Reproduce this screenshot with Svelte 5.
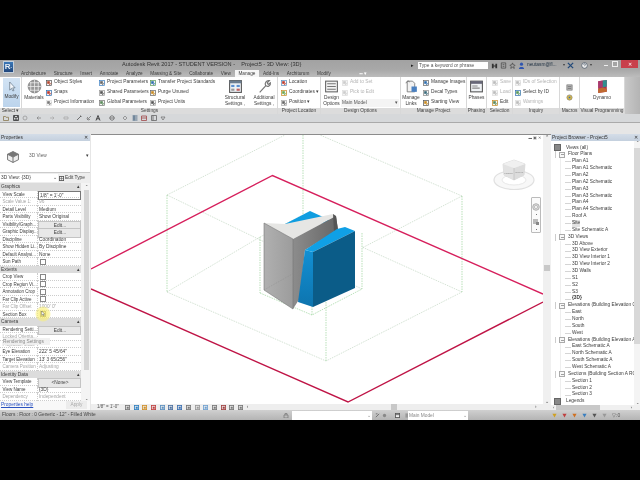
<script lang="ts">
	const tabs = ['Architecture', 'Structure', 'Insert', 'Annotate', 'Analyze', 'Massing & Site', 'Collaborate', 'View', 'Manage', 'Add-Ins', 'Architurum', 'Modify'];

	const settingsCols = [
		{ cls: 'w53', items: [['Object Styles', '#b5472f', '#555'], ['Snaps', '#c0392b', '#2f6fb0'], ['Project Information', '#777', '#ddd']] },
		{ cls: 'w51', items: [['Project Parameters', '#666', '#3b7fc4'], ['Shared Parameters', '#555', '#999'], ['Global Parameters', '#5a8a5a', '#777']] },
		{ cls: 'w70', items: [['Transfer Project Standards', '#2f6fb0', '#5a9a5a'], ['Purge Unused', '#c98a20', '#666'], ['Project Units', '#555', '#aaa']] }
	];
	const locationRows = [['Location', '#c0392b', '#5a8fc0'], ['Coordinates ▾', '#6aa84f', '#c98a20'], ['Position ▾', '#666', '#aaa']];
	const manageRows = [['Manage Images', '#2f6fb0', '#666'], ['Decal Types', '#3a6a7a', '#888'], ['Starting View', '#c98a20', '#555']];
	const selectionRows = [['Save', '#bbb', '#ddd', true], ['Load', '#bbb', '#ddd', true], ['Edit', '#5a8a5a', '#c98a20', false]];
	const inquiryRows = [['IDs of Selection', '#bbb', '#ddd', true], ['Select by ID', '#5a9a5a', '#2f6fb0', false], ['Warnings', '#bbb', '#ddd', true]];

	const rows = [
		{ h: 'Graphics' },
		{ l: 'View Scale', v: '1/8" = 1\'-0"', k: 'input' },
		{ l: 'Scale Value   1:', v: '96', m: true },
		{ l: 'Detail Level', v: 'Medium' },
		{ l: 'Parts Visibility', v: 'Show Original' },
		{ l: 'Visibility/Graph...', v: 'Edit...', k: 'btn' },
		{ l: 'Graphic Display...', v: 'Edit...', k: 'btn' },
		{ l: 'Discipline', v: 'Coordination' },
		{ l: 'Show Hidden Li...', v: 'By Discipline' },
		{ l: 'Default Analysi...', v: 'None' },
		{ l: 'Sun Path', k: 'check' },
		{ h: 'Extents' },
		{ l: 'Crop View', k: 'check' },
		{ l: 'Crop Region Vi...', k: 'check' },
		{ l: 'Annotation Crop', k: 'check' },
		{ l: 'Far Clip Active', k: 'check' },
		{ l: 'Far Clip Offset', v: '1000\' 0"', m: true },
		{ l: 'Section Box', k: 'check' },
		{ h: 'Camera' },
		{ l: 'Rendering Setti...', v: 'Edit...', k: 'btn' },
		{ l: 'Locked Orienta...', m: true },
		{ l: 'Projection Mode', m: true },
		{ l: 'Eye Elevation', v: '222\' 5 45/64"' },
		{ l: 'Target Elevation', v: '13\' 3 65/256"' },
		{ l: 'Camera Position', v: 'Adjusting', m: true },
		{ h: 'Identity Data' },
		{ l: 'View Template', v: '<None>', k: 'btn' },
		{ l: 'View Name', v: '{3D}' },
		{ l: 'Dependency', v: 'Independent', m: true }
	];

	const tree = [
		['Views (all)', 0], ['Floor Plans', 1],
		['Plan A1', 2], ['Plan A1 Schematic', 2], ['Plan A2', 2], ['Plan A2 Schematic', 2], ['Plan A3', 2], ['Plan A3 Schematic', 2], ['Plan A4', 2], ['Plan A4 Schematic', 2], ['Roof A', 2], ['Site', 2, 'sel'], ['Site Schematic A', 2],
		['3D Views', 1],
		['3D Above', 2], ['3D View Exterior', 2], ['3D View Interior 1', 2], ['3D View Interior 2', 2], ['3D Walls', 2], ['S1', 2], ['S2', 2], ['S3', 2], ['{3D}', 2, 'cur'],
		['Elevations (Building Elevation 0', 1],
		['East', 2], ['North', 2], ['South', 2], ['West', 2],
		['Elevations (Building Elevation A', 1],
		['East Schematic A', 2], ['North Schematic A', 2], ['South Schematic A', 2], ['West Schematic A', 2],
		['Sections (Building Section A RO', 1],
		['Section 1', 2], ['Section 2', 2], ['Section 3', 2],
		['Legends', 0]
	];

	// quick access glyphs, sep = wider gap before the icon
	const qat = [
		{ d: 'M.5 5.500V1.500h2l.6.8h2.400v3.200z', c: '#8a7a50' },
		{ d: 'M.5.5h5v5h-5zM1.500.5v2h3v-2M2 5.500V4h2v1.500', c: '#333' },
		{ d: 'M1 3a2 2 0 0 1 4 0M5 3a2 2 0 0 1-4 0', c: '#999' },
		{ d: 'M1 3h4M1 3l1.500-1.500M1 3l1.500 1.500', c: '#888', sep: true },
		{ d: 'M5 3H1M5 3L3.500 1.500M5 3L3.500 4.500', c: '#aaa', sep: true },
		{ d: 'M1 2h4v2H1z', c: '#aaa', sep: true },
		{ d: 'M1 5L5 1M4 1h1v1', c: '#555', sep: true },
		{ d: 'M1 5l1-1 3-3M2 2a1.500 1.500 0 1 0 2 2', c: '#777' },
		{ d: 'M1 5.500L3 .5l2 5M1.800 3.800h2.400', c: '#222' },
		{ d: 'M3 .8a2.200 2.200 0 1 0 .01 0M.8 3h4.400', c: '#666', sep: true },
		{ d: 'M3 1l2 2-2 2-2-2z', c: '#888', sep: true },
		{ d: 'M.5 1h5M.5 3h5M.5 5h5M2 .5v5', c: '#3a5a7a' },
		{ d: 'M.5 1h5v4.500h-5zM.5 3h5', c: '#a04848' },
		{ d: 'M.5.5h5v5h-5zM2 .5v5', c: '#666' },
		{ d: 'M1 2l2 3 2-3z', c: '#777' }
	];
	const viewIcons = ['#777', '#2f7fc0', '#d0902a', '#c04040', '#5a8fc0', '#4a6fa0', '#3a6fb0', '#777', '#999', '#6fa0d0', '#777', '#a04040', '#777', '#777'];
	const browserIcons = ['#d0a020', '#c04040', '#d07020', '#3a7fc0', '#555', '#999'];
</script>

{#snippet ic(a: string, b: string)}
	<svg class="ic" viewBox="0 0 6 6" aria-hidden="true">
		<rect x="0.5" y="0.5" width="5" height="5" fill="#f4f4f4" stroke={b} stroke-width="0.7" />
		<rect x="1.2" y="1.2" width="2.6" height="2.6" fill={a} />
		<path d="M3 5 L5.4 3" stroke={a} stroke-width="0.8" />
	</svg>
{/snippet}

{#snippet tool(label: string, a: string, b: string, off = false)}
	<div class="tool" class:off>
		{@render ic(a, b)}
		<span>{label}</span>
	</div>
{/snippet}

<div class="app">
	<header class="chrome">
		<div class="rbtn">R<i>-</i></div>
		<div class="stack">
			<div class="titlebar">
				<span class="title">Autodesk Revit 2017 - STUDENT VERSION -&nbsp;&nbsp;&nbsp;&nbsp;Project5 - 3D View: &#123;3D&#125;</span>
				<span class="search-arrow">▸</span>
				<span class="search">Type a keyword or phrase</span>
				<div class="infocenter">
					<svg class="ib" viewBox="0 0 8 8" aria-hidden="true"><path d="M1 2h2v5H1zM5 2h2v5H5zM3 4h2v1H3z" fill="#333" /></svg>
					<svg class="ib" viewBox="0 0 8 8" aria-hidden="true"><path d="M1.500 1h5v6h-5zM3 3h2M3 5h2" fill="none" stroke="#444" stroke-width=".8" /></svg>
					<svg class="ib" viewBox="0 0 8 8" aria-hidden="true"><path d="M4 1l1 2.400 2 .2-1.500 1.500.5 2.200L4 6 2 7.300l.5-2.200L1 3.600l2-.2z" fill="none" stroke="#444" stroke-width=".8" /></svg>
					<svg class="ib" viewBox="0 0 8 8" aria-hidden="true"><circle cx="4" cy="2.500" r="1.800" fill="#2f55b0" /><path d="M1 8c0-3 6-3 6 0z" fill="#2f55b0" /></svg>
					<span class="user">neutasm@fl...</span>
					<span class="caret">▾</span>
					<svg class="ib" viewBox="0 0 8 8" aria-hidden="true"><path d="M1 1l6 6M7 1L1 7" stroke="#234a7a" stroke-width="1.500" /></svg>
					<svg class="ib help" viewBox="0 0 8 8" aria-hidden="true"><circle cx="4" cy="4" r="3.200" fill="#eee" stroke="#345" stroke-width=".7" /><path d="M3 3c0-1.300 2-1.300 2 0 0 .8-1 .8-1 1.800" fill="none" stroke="#345" stroke-width=".7" /></svg>
					<span class="caret">▾</span>
				</div>
				<div class="winbtns">
					<span class="min"></span>
					<span class="max"></span>
					<span class="close">✕</span>
				</div>
			</div>
			<nav class="tabs">
				{#each tabs as t}
					<span class="tab" class:active={t === 'Manage'}>{t}</span>
				{/each}
				<span class="tabmore">▪▪ ▾</span>
			</nav>
		</div>
	</header>

	<section class="ribbon">
		<div class="panel p-select">
			<div class="body">
				<div class="modify">
					<svg class="cursor" viewBox="0 0 10 12" aria-hidden="true"><path d="M3 1v9l2-2 1.500 3 1.300-.6L6.300 7.500H9z" fill="#f4f8fc" stroke="#567" stroke-width=".7" /></svg>
					<span>Modify</span>
				</div>
			</div>
			<div class="plabel">Select ▾</div>
		</div>

		<div class="panel p-settings">
			<div class="body">
				<div class="big w24">
					<svg class="bigicon" viewBox="0 0 14 14" aria-hidden="true">
						<circle cx="7" cy="7" r="6" fill="#999" stroke="#666" stroke-width=".5" />
						<path d="M1 7h12M7 1v12M2.500 3.500h9M2.500 10.500h9M3.500 2.500v9M10.500 2.500v9" stroke="#eee" stroke-width=".7" />
					</svg>
					<span>Materials</span>
				</div>
				{#each settingsCols as col}
					<div class="col {col.cls}">
						{#each col.items as it}
							{@render tool(it[0], it[1], it[2])}
						{/each}
					</div>
				{/each}
				<div class="big w30">
					<svg class="bigicon" viewBox="0 0 14 14" aria-hidden="true">
						<rect x="1.500" y="1.500" width="11" height="11" fill="#eef2f6" stroke="#555" />
						<rect x="1.500" y="1.500" width="11" height="2.500" fill="#6b7c8f" />
						<rect x="3" y="5.500" width="3" height="2" fill="#5a8fd0" /><rect x="8" y="5.500" width="3" height="2" fill="#5a8fd0" />
						<rect x="3" y="9" width="3" height="2" fill="#999" /><rect x="8" y="9" width="3" height="2" fill="#c06060" />
					</svg>
					<span>Structural<br />Settings ,</span>
				</div>
				<div class="big w28">
					<svg class="bigicon" viewBox="0 0 14 14" aria-hidden="true">
						<path d="M2.500 12.500l6-6.500M8 6c-1-2 .5-5 3.500-4.500L9.500 3.500l1 1.500 2-1.500C13 6 10 8 8 6z" fill="none" stroke="#777" stroke-width="1.100" />
					</svg>
					<span>Additional<br />Settings ,</span>
				</div>
			</div>
			<div class="plabel">Settings</div>
		</div>

		<div class="panel p-location">
			<div class="body">
				<div class="col pad3">
					{#each locationRows as it}
						{@render tool(it[0], it[1], it[2])}
					{/each}
				</div>
			</div>
			<div class="plabel">Project Location</div>
		</div>

		<div class="panel p-design">
			<div class="body">
				<div class="big w21">
					<svg class="bigicon" viewBox="0 0 14 14" aria-hidden="true">
						<rect x="1.500" y="2" width="11" height="10" fill="#f2f2f2" stroke="#666" />
						<path d="M3 4.500h8M3 7h8M3 9.500h8" stroke="#777" />
					</svg>
					<span>Design<br />Options</span>
				</div>
				<div class="col grow">
					{@render tool('Add to Set', '#ccc', '#ddd', true)}
					{@render tool('Pick to Edit', '#ccc', '#ddd', true)}
					<div class="combo">Main Model <b>▾</b></div>
				</div>
			</div>
			<div class="plabel">Design Options</div>
		</div>

		<div class="panel p-manage">
			<div class="body">
				<div class="big w20">
					<svg class="bigicon" viewBox="0 0 14 14" aria-hidden="true">
						<path d="M3 2h5l2 2v8H3z" fill="#f2f2f2" stroke="#777" stroke-width=".8" />
						<path d="M2 4c0-2 3-3 3-1" fill="none" stroke="#777" stroke-width=".9" />
						<rect x="7" y="7" width="5" height="5" fill="#4a80c0" />
					</svg>
					<span>Manage<br />Links</span>
				</div>
				<div class="col pad2">
					{#each manageRows as it}
						{@render tool(it[0], it[1], it[2])}
					{/each}
				</div>
			</div>
			<div class="plabel">Manage Project</div>
		</div>

		<div class="panel p-phasing">
			<div class="body">
				<div class="big wfull">
					<svg class="bigicon" viewBox="0 0 14 14" aria-hidden="true">
						<rect x="1.500" y="2" width="11" height="10" fill="#f0f3f6" stroke="#555" />
						<rect x="1.500" y="2" width="11" height="2.500" fill="#667" />
						<path d="M3 6.500h5M3 8.500h7" stroke="#888" />
					</svg>
					<span>Phases</span>
				</div>
			</div>
			<div class="plabel">Phasing</div>
		</div>

		<div class="panel p-selection">
			<div class="body">
				<div class="col pad5">
					{#each selectionRows as it}
						{@render tool(it[0] as string, it[1] as string, it[2] as string, it[3] as boolean)}
					{/each}
				</div>
			</div>
			<div class="plabel">Selection</div>
		</div>

		<div class="panel p-inquiry">
			<div class="body">
				<div class="col pad2">
					{#each inquiryRows as it}
						{@render tool(it[0] as string, it[1] as string, it[2] as string, it[3] as boolean)}
					{/each}
				</div>
			</div>
			<div class="plabel">Inquiry</div>
		</div>

		<div class="panel p-macros">
			<div class="body macros">
				<svg class="mi" viewBox="0 0 8 8" aria-hidden="true"><rect x="1" y="1" width="6" height="6" fill="#bbb" stroke="#666" stroke-width=".7" /><path d="M2 3h4M2 5h4" stroke="#555" stroke-width=".7" /></svg>
				<svg class="mi" viewBox="0 0 8 8" aria-hidden="true"><circle cx="4" cy="4" r="3" fill="#e5c040" stroke="#777" stroke-width=".7" /><path d="M3 3h2v2H3z" fill="#3a6fb0" /></svg>
			</div>
			<div class="plabel">Macros</div>
		</div>

		<div class="panel p-dynamo">
			<div class="body">
				<div class="big wfull">
					<svg class="bigicon" viewBox="0 0 14 14" aria-hidden="true">
						<path d="M3 2l8-1v11l-8 1z" fill="#b03050" />
						<path d="M7 1.500l4-.5v6l-4 1z" fill="#2f8f8f" />
						<path d="M3 2l4-.5v6l-4 1z" fill="#a83a70" />
						<path d="M3 9l4-1 4 1v3l-8 1z" fill="#c06a30" />
					</svg>
					<span>Dynamo</span>
				</div>
			</div>
			<div class="plabel">Visual Programming</div>
		</div>
		<div class="ribbon-end"></div>
	</section>

	<div class="qat">
		{#each qat as q}
			<svg class="qi" class:sep={q.sep} viewBox="0 0 6 6" aria-hidden="true"><path d={q.d} fill="none" stroke={q.c} stroke-width=".8" /></svg>
		{/each}
	</div>
	<div class="band"></div>

	<main class="work">
		<aside class="props">
			<div class="phead"><span>Properties</span><b>✕</b></div>
			<div class="typesel">
				<svg class="typeicon" viewBox="0 0 18 18" aria-hidden="true">
					<path d="M9 2l7 3.500v7L9 16l-7-3.500v-7z" fill="#eee" stroke="#555" />
					<path d="M2 5.500L9 9l7-3.500M9 9v7" fill="none" stroke="#555" />
					<path d="M2 5.500L9 2l7 3.500L9 9z" fill="#777" />
				</svg>
				<span class="typename">3D View</span>
				<b>▾</b>
			</div>
			<div class="typerow">
				<div class="typecombo"><span>3D View: &#123;3D&#125;</span><b>⌄</b></div>
				<div class="edittype">
					<svg class="et" viewBox="0 0 6 6" aria-hidden="true"><rect x=".5" y=".5" width="5" height="5" fill="none" stroke="#555" /><path d="M.5 3h5M3 .5v5" stroke="#555" stroke-width=".6" /></svg>
					Edit Type
				</div>
			</div>
			<div class="ptable">
				<div class="plist">
					{#each rows as r}
						{#if r.h}
							<div class="psec"><span>{r.h}</span><b>▴</b></div>
						{:else}
							<div class="prow" class:muted={r.m}>
								<span class="pl">{r.l}</span>
								{#if r.k === 'btn'}
									<span class="pv btn">{r.v}</span>
								{:else if r.k === 'input'}
									<span class="pv inp">{r.v}</span>
								{:else if r.k === 'check'}
									<span class="pv"><i class="check"></i></span>
								{:else}
									<span class="pv">{r.v ?? ''}</span>
								{/if}
							</div>
						{/if}
					{/each}
				</div>
				<div class="vscroll"><b>⌃</b><i class="thumb"></i><b>⌄</b></div>
			</div>
			<div class="phelp"><a href="#help">Properties help</a><span class="apply">Apply</span></div>
			<div class="ghost">Rendering Settings</div>
			<div class="spot"></div>
			<svg class="arrow" viewBox="0 0 8 10" aria-hidden="true"><path d="M1 1v7l1.800-1.600 1.200 2.600 1-.5-1.200-2.500H6z" fill="#fff" stroke="#333" stroke-width=".6" /></svg>
		</aside>

		<div class="viewport">
			<div class="canvasrow">
				<div class="canvas">
					<svg class="model" viewBox="91 135 452 269" aria-label="3D view">
						<g class="grid">
							<path d="M167 195L285 135M167 195L362 289M167 292L260 237M167 292L326 361L462 292M462 196L320 135M462 196L362 248M462 292L362 247M260 237L303 215" />
							<path class="gv" d="M167 195V292M462 196V292M303 135V216M260 237V293M326 361V290M362 233V289M312 315V300M260 293L312 315L362 289" />
						</g>
						<path class="red top" d="M91 269L272.500 175.500L543 294" />
						<path class="red" d="M91 289L348 402L543 302" />

						<path d="M285 224L310 211L334 222L300 226Z" fill="#0f9de0" />
						<path d="M264 223L285 224L333 214L336 216L293 239Z" fill="#e6e6e4" />
						<path d="M264 223L293 239V309L264 290Z" fill="url(#wedgeL)" />
						<path d="M293 239L336 216L338 230L305 250L300 298L293 309Z" fill="url(#wedgeR)" />
						<path d="M333 214L336 216L338 230L334 232Z" fill="#555" />
						<path d="M264 223L293 239V309L264 290Z" fill="none" stroke="#777" stroke-width=".6" />
						<path d="M264 290L303 268" stroke="#8a8a8a" stroke-width=".5" stroke-dasharray="1 1" fill="none" />

						<path d="M305 250L313 252V307L298 302Z" fill="url(#blueL)" />
						<path d="M305 250L337 229L345 227L355 231L313 252Z" fill="#10a0e6" />
						<path d="M313 252L355 231V288L313 307Z" fill="#0b5c88" />

						<defs>
							<linearGradient id="wedgeL" x1="0" x2="1"><stop offset="0" stop-color="#b0b0b0" /><stop offset="1" stop-color="#9c9c9c" /></linearGradient>
							<linearGradient id="wedgeR" x1="0" x2="1"><stop offset="0" stop-color="#8c8c8c" /><stop offset="1" stop-color="#666" /></linearGradient>
							<linearGradient id="blueL" x1="0" x2="0" y1="0" y2="1"><stop offset="0" stop-color="#1290d4" /><stop offset="1" stop-color="#0e74ae" /></linearGradient>
						</defs>
					</svg>

					<svg class="viewcube" viewBox="0 0 44 32" aria-hidden="true">
						<ellipse cx="21" cy="21" rx="20" ry="9.500" fill="#f8f8f8" stroke="#e0e0e0" stroke-width="1.200" />
						<ellipse cx="21" cy="21" rx="12" ry="5" fill="#fff" stroke="#e8e8e8" />
						<path d="M21 1l11 4-1 11-10 5-10-5-1-11z" fill="#e8e8e8" stroke="#ccc" stroke-width=".6" />
						<path d="M21 9l11-4-1 11-10 5z" fill="#dcdcdc" />
						<path d="M10 5l11 4v12l-10-5z" fill="#e2e2e2" />
						<path d="M10 5l11 4 11-4-11-4z" fill="#f0f0f0" />
						<path d="M21 9v12" stroke="#bbb" stroke-width=".6" />
						<text x="15.500" y="15" class="cube-t">FRONT</text>
						<text x="26.500" y="14" class="cube-t">RIGHT</text>
					</svg>
					<div class="navbar">
						<svg class="nav1" viewBox="0 0 8 8" aria-hidden="true"><circle cx="4" cy="4" r="3.300" fill="#ddd" stroke="#999" stroke-width=".7" /><circle cx="4" cy="4" r="1.600" fill="#f4f4f4" stroke="#999" stroke-width=".5" /></svg>
						<i></i>
						<svg class="nav1" viewBox="0 0 8 8" aria-hidden="true"><rect x="1" y="1" width="5" height="5" fill="#bbb" /><rect x="4" y="4" width="3" height="3" fill="#888" /></svg>
						<i></i>
					</div>
					<div class="vctrl">▬ ▣ ✕</div>
				</div>
				<div class="cscroll"><b>⌃</b><i class="cthumb"></i><b>⌄</b></div>
			</div>
			<div class="viewbar">
				<span class="scale">1/8" = 1'-0"</span>
				<div class="vicons">
					{#each viewIcons as c}
						<svg class="vi" viewBox="0 0 6 6" aria-hidden="true"><rect x=".5" y=".5" width="5" height="5" fill="none" stroke={c} /><rect x="2" y="2" width="2.500" height="2.500" fill={c} /></svg>
					{/each}
					<span class="lt">‹</span>
				</div>
				<i class="hthumb"></i>
				<span class="rt">›</span>
			</div>
		</div>

		<aside class="browser">
			<div class="phead"><span>Project Browser - Project5</span><b>✕</b></div>
			<div class="treewrap">
				<div class="tree">
					{#each tree as t}
						<div class="node l{t[1]} {t[2] ?? ''}">
							{#if t[1] === 1}<i class="exp"></i>{/if}
							{#if t[1] === 0}<i class="rooticon"></i>{/if}
							<span>{t[0]}</span>
						</div>
					{/each}
				</div>
				<div class="bscroll"><b>⌃</b><i class="bthumb"></i><b>⌄</b></div>
			</div>
			<div class="bhscroll"><span>‹</span><i></i><span>›</span></div>
		</aside>
	</main>

	<footer class="status">
		<span class="stext">Floors : Floor : 0 Generic - 12" - Filled White</span>
		<svg class="lock" viewBox="0 0 6 6" aria-hidden="true"><path d="M1 3h4v3H1zM2 3V1.500h2V3" fill="none" stroke="#777" stroke-width=".7" /></svg>
		<div class="scombo wa"><b>⌄</b></div>
		<span class="sicons">
			<svg class="vi" viewBox="0 0 6 6" aria-hidden="true"><path d="M1 5L5 1M1 1h2" stroke="#666" /></svg>
			<svg class="vi" viewBox="0 0 6 6" aria-hidden="true"><circle cx="3" cy="3" r="2" fill="#888" /></svg>
		</span>
		<span class="sicons gap2">
			<svg class="vi" viewBox="0 0 6 6" aria-hidden="true"><rect x=".5" y=".5" width="5" height="5" fill="#eee" stroke="#555" /><path d="M.5 2h5" stroke="#555" /></svg>
			<svg class="vi" viewBox="0 0 6 6" aria-hidden="true"><rect x=".5" y=".5" width="5" height="5" fill="#999" /></svg>
		</span>
		<div class="scombo wb"><span>Main Model</span><b>⌄</b></div>
		<div class="bicons">
			{#each browserIcons as c}
				<svg class="vi" viewBox="0 0 6 6" aria-hidden="true"><path d="M.5 1h5L3 5.500z" fill={c} /></svg>
			{/each}
			<span class="filter">▽:0</span>
		</div>
	</footer>
</div>

<style>
	:global(body) {
		margin: 0;
		padding-top: 60px;
		box-sizing: border-box;
		background: #000;
		height: 480px;
		overflow: hidden;
	}

	.app {
		width: 640px;
		height: 360px;
		font-family: 'Liberation Sans', Arial, sans-serif;
		font-size: 4.800px;
		color: #3c3c3c;
		line-height: 1;
		background: #e6e6e6;
		filter: blur(0.3px);
		overflow: hidden;
	}

	b {
		font-weight: normal;
	}

	/* title + tabs */
	.chrome {
		display: flex;
		height: 17px;
		background: linear-gradient(#a2a2a2, #a8a8a8 55%, #bcbcbc);
	}

	.rbtn {
		width: 11px;
		height: 12px;
		margin: 1px 0 0 3px;
		background: linear-gradient(#3a78b8, #20467c);
		border: 1px solid #c4d0dc;
		box-sizing: border-box;
		color: #e8eef4;
		font-size: 8px;
		font-weight: bold;
		line-height: 10px;
		text-align: center;
		flex: none;
	}

	.rbtn i {
		font-style: normal;
		font-size: 5px;
	}

	.stack {
		flex: 1;
		min-width: 0;
		display: flex;
		flex-direction: column;
	}

	.titlebar {
		height: 10px;
		display: flex;
		align-items: center;
	}

	.title {
		margin-left: 108px;
		width: 289px;
		font-size: 5.600px;
		white-space: nowrap;
		color: #333;
		flex: none;
	}

	.search-arrow {
		width: 7px;
		font-size: 5px;
		flex: none;
		color: #222;
	}

	.search {
		width: 70px;
		height: 7px;
		line-height: 7px;
		background: #fff;
		padding-left: 1px;
		box-sizing: border-box;
		color: #555;
		flex: none;
	}

	.infocenter {
		display: flex;
		align-items: center;
		gap: 2px;
		margin-left: 3px;
		width: 113px;
		flex: none;
	}

	.ib {
		width: 7px;
		height: 7px;
		flex: none;
	}

	.help {
		margin-left: 5px;
	}

	.user {
		color: #234;
		width: 34px;
		flex: none;
		white-space: nowrap;
	}

	.caret {
		font-size: 4px;
	}

	.winbtns {
		display: flex;
		align-items: stretch;
		height: 8px;
		margin-top: -2px;
		flex: none;
	}

	.min {
		width: 4px;
		height: 1px;
		background: #eee;
		margin: 5px 4px 0 0;
	}

	.max {
		width: 4px;
		height: 4px;
		border: 1px solid #eee;
		margin: 1px 3px 0 0;
	}

	.close {
		width: 17px;
		background: #c8404c;
		color: #fff;
		text-align: center;
		line-height: 8px;
		font-size: 5px;
	}

	.tabs {
		height: 7px;
		display: flex;
		gap: 0;
		padding-left: 3.300px;
		align-items: stretch;
		font-size: 4.700px;
	}

	.tab {
		padding: 0 3.800px;
		line-height: 7px;
		white-space: nowrap;
		color: #3a3a3a;
	}

	.tab.active {
		background: #f6f6f6;
	}

	.tabmore {
		margin-left: 25px;
		line-height: 7px;
		color: #fff;
		white-space: nowrap;
	}

	/* ribbon */
	.ribbon {
		display: flex;
		height: 37px;
		background: #fff;
	}

	.panel {
		display: flex;
		flex-direction: column;
		border-right: 1px solid #d8d8d8;
		box-sizing: border-box;
		flex: none;
	}

	.p-select { width: 22px; }
	.p-settings { width: 256px; }
	.p-location { width: 43px; }
	.p-design { width: 80px; }
	.p-manage { width: 66px; }
	.p-phasing { width: 20px; }
	.p-selection { width: 26px; }
	.p-inquiry { width: 47px; }
	.p-macros { width: 20px; }
	.p-dynamo { width: 45px; }

	.ribbon-end {
		flex: 1;
		background: linear-gradient(90deg, #c8c8c8, #b4b4b4);
	}

	.body {
		height: 31px;
		display: flex;
		flex: none;
	}

	.plabel {
		height: 6px;
		line-height: 6px;
		background: #dcdcdc;
		text-align: center;
		white-space: nowrap;
		color: #444;
	}

	.modify {
		width: 17px;
		margin: 1px 0 0 3px;
		height: 29px;
		background: linear-gradient(#d2e3f4, #bcd4ec);
		display: flex;
		flex-direction: column;
		align-items: center;
		padding-top: 3px;
		box-sizing: border-box;
		gap: 3px;
	}

	.cursor {
		width: 9px;
		height: 11px;
	}

	.big {
		display: flex;
		flex-direction: column;
		align-items: center;
		text-align: center;
		line-height: 6.500px;
		padding-top: 2px;
		box-sizing: border-box;
		flex: none;
		white-space: nowrap;
	}

	.bigicon {
		width: 15px;
		height: 15px;
		margin-bottom: 0.500px;
		flex: none;
	}

	.w20 { width: 20px; }
	.w21 { width: 21px; }
	.w24 { width: 24px; }
	.w28 { width: 28px; }
	.w30 { width: 30px; }
	.w51 { width: 51px; }
	.w53 { width: 53px; }
	.w70 { width: 70px; }
	.wfull { width: 100%; }

	.col {
		display: flex;
		flex-direction: column;
		flex: none;
		padding-top: 0.500px;
	}

	.grow { flex: 1; min-width: 0; }
	.pad2 { padding-left: 2px; }
	.pad3 { padding-left: 3px; }
	.pad5 { padding-left: 5px; }

	.tool {
		height: 10px;
		display: flex;
		align-items: center;
		gap: 2px;
		white-space: nowrap;
	}

	.tool.off {
		color: #b4b4b4;
	}

	.ic {
		width: 6px;
		height: 6px;
		flex: none;
	}

	.combo {
		margin: 1px 1px 0 -1px;
		height: 8px;
		line-height: 8px;
		background: #f4f4f4;
		color: #555;
		padding: 0 1px;
		display: flex;
		justify-content: space-between;
	}

	.macros {
		flex-direction: column;
		align-items: center;
		gap: 3px;
		padding-top: 7px;
		box-sizing: border-box;
	}

	.mi {
		width: 7px;
		height: 7px;
	}

	/* toolbars */
	.qat {
		height: 9px;
		display: flex;
		align-items: center;
		gap: 3.500px;
		padding-left: 3px;
		background: #d6d8da;
		border-bottom: 1px solid #aaa;
		box-sizing: border-box;
	}

	.qi {
		width: 6px;
		height: 6px;
		flex: none;
	}

	.qi.sep {
		margin-left: 4px;
	}

	.band {
		height: 11px;
		background: #e6e6e6;
	}

	/* main area */
	.work {
		display: flex;
		height: 276px;
	}

	.props {
		position: relative;
		width: 90px;
		flex: none;
		display: flex;
		flex-direction: column;
		background: #f4f4f4;
		margin-right: 1px;
	}

	.phead {
		height: 7px;
		line-height: 7px;
		background: linear-gradient(#d4dde8, #c4d0de);
		padding: 0 2px 0 1px;
		display: flex;
		justify-content: space-between;
		color: #333;
		flex: none;
	}

	.typesel {
		height: 32px;
		background: #fff;
		display: flex;
		align-items: center;
		flex: none;
		border-bottom: 1px solid #ccc;
		box-sizing: border-box;
		padding-right: 1px;
	}

	.typeicon {
		width: 14px;
		height: 14px;
		margin-left: 6px;
	}

	.typename {
		margin-left: 9px;
		flex: 1;
		color: #666;
	}

	.typerow {
		height: 10px;
		display: flex;
		align-items: center;
		flex: none;
		gap: 1px;
		background: #eee;
		padding-right: 3px;
	}

	.typecombo {
		width: 58px;
		height: 8px;
		line-height: 8px;
		background: #fff;
		padding: 0 1px;
		box-sizing: border-box;
		display: flex;
		justify-content: space-between;
	}

	.edittype {
		flex: 1;
		white-space: nowrap;
		display: flex;
		align-items: center;
		gap: 1px;
	}

	.et {
		width: 5px;
		height: 5px;
	}

	.ptable {
		height: 217.500px;
		display: flex;
		background: #fff;
		flex: none;
	}

	.plist {
		width: 81px;
		flex: none;
	}

	.psec {
		height: 7.500px;
		line-height: 7.500px;
		background: #dcdcdc;
		padding: 0 1px;
		display: flex;
		justify-content: space-between;
		box-sizing: border-box;
	}

	.prow {
		height: 7.500px;
		line-height: 7.500px;
		display: grid;
		grid-template-columns: 38px minmax(0, 1fr);
		border-bottom: 1px dotted #ccc;
		box-sizing: border-box;
		background: #fff;
	}

	.prow.muted {
		color: #a6a6a6;
	}

	.pl {
		padding-left: 2.500px;
		border-right: 1px dotted #ccc;
		white-space: nowrap;
		font-size: 4.500px;
		min-width: 0;
	}

	.pv {
		padding-left: 1px;
		white-space: nowrap;
		display: flex;
		align-items: center;
		min-width: 0;
	}

	.btn {
		background: #e8e8e8;
		border: 0.500px solid #c4c4c4;
		justify-content: center;
		box-sizing: border-box;
	}

	.inp {
		border: 0.500px solid #777;
		box-sizing: border-box;
	}

	.check {
		width: 4px;
		height: 4px;
		border: 0.500px solid #888;
		background: #fff;
		margin-left: 1px;
	}

	.vscroll {
		flex: 1;
		background: #f4f4f4;
		display: flex;
		flex-direction: column;
		align-items: center;
		font-size: 4px;
		padding: 2px 0 0 2px;
		box-sizing: border-box;
		justify-content: space-between;
	}

	.thumb {
		width: 5px;
		height: 180px;
		background: #d4d4d4;
		margin: -4px 0 22px;
	}

	.phelp {
		flex: 1;
		display: flex;
		align-items: center;
		justify-content: space-between;
		background: #f8f8f8;
		padding: 0 3px 0 1px;
	}

	.phelp a {
		color: #2a52c0;
		text-decoration: underline;
	}

	.apply {
		width: 21px;
		height: 8px;
		line-height: 8px;
		text-align: center;
		background: #ececec;
		color: #aaa;
	}

	.ghost {
		position: absolute;
		left: 3px;
		top: 204px;
		width: 47px;
		height: 7px;
		line-height: 7px;
		background: rgba(240, 240, 240, 0.9);
		color: #888;
		white-space: nowrap;
	}

	.spot {
		position: absolute;
		left: 35px;
		top: 172px;
		width: 16px;
		height: 16px;
		border-radius: 50%;
		background: radial-gradient(circle, rgba(250, 235, 90, 0.85), rgba(250, 240, 120, 0.55) 60%, transparent 72%);
	}

	.arrow {
		position: absolute;
		left: 41px;
		top: 176px;
		width: 5px;
		height: 7px;
	}

	.viewport {
		flex: 1;
		min-width: 0;
		display: flex;
		flex-direction: column;
		border-top: 1px solid #8c8c8c;
		box-sizing: border-box;
	}

	.canvasrow {
		height: 269px;
		display: flex;
		flex: none;
	}

	.canvas {
		position: relative;
		width: 452px;
		height: 269px;
		background: #fff;
		flex: none;
	}

	.model {
		display: block;
		width: 452px;
		height: 269px;
	}

	.grid path {
		fill: none;
		stroke: #b8d0b8;
		stroke-width: 0.600;
		stroke-dasharray: 1.500 1;
	}

	.grid .gv {
		stroke: #8ccc8c;
	}

	.red {
		fill: none;
		stroke: #bf1446;
		stroke-width: 1.400;
	}

	.red.top {
		stroke: #d61f5c;
	}

	.viewcube {
		position: absolute;
		left: 402px;
		top: 24px;
		width: 44px;
		height: 32px;
	}

	.cube-t {
		font-size: 2.500px;
		fill: #888;
		text-anchor: middle;
	}

	.navbar {
		position: absolute;
		left: 440px;
		top: 62px;
		width: 10px;
		height: 36px;
		background: #fbfbfb;
		border: 0.500px solid #bbb;
		border-radius: 1px;
		display: flex;
		flex-direction: column;
		align-items: center;
		gap: 3px;
		padding-top: 5px;
		box-sizing: border-box;
	}

	.nav1 {
		width: 8px;
		height: 8px;
	}

	.navbar i {
		width: 1px;
		height: 1px;
		background: #777;
	}

	.vctrl {
		position: absolute;
		right: 2px;
		top: 2px;
		font-size: 3.500px;
		color: #666;
		white-space: nowrap;
	}

	.cscroll {
		flex: 1;
		background: #f0f0f0;
		display: flex;
		flex-direction: column;
		align-items: center;
		justify-content: space-between;
		font-size: 5px;
	}

	.cthumb {
		width: 6px;
		height: 6px;
		background: #c8c8c8;
		margin-top: -4px;
	}

	.viewbar {
		flex: 1;
		display: flex;
		align-items: center;
		background: #eee;
		padding-left: 6px;
		color: #555;
		font-size: 4.500px;
	}

	.scale {
		width: 28px;
		flex: none;
		white-space: nowrap;
	}

	.vicons {
		display: flex;
		align-items: center;
		gap: 3.700px;
		width: 266px;
		flex: none;
	}

	.vi {
		width: 5px;
		height: 5px;
		flex: none;
	}

	.hthumb {
		width: 6px;
		height: 6px;
		background: #c8c8c8;
		margin-right: 138px;
		flex: none;
	}

	.browser {
		width: 89px;
		flex: none;
		display: flex;
		flex-direction: column;
		background: #fff;
	}

	.treewrap {
		flex: 1;
		min-height: 0;
		display: flex;
	}

	.tree {
		flex: 1;
		min-width: 0;
		padding-top: 3.500px;
	}

	.node {
		height: 6.870px;
		line-height: 6.870px;
		display: flex;
		align-items: center;
		white-space: nowrap;
		box-sizing: border-box;
	}

	.node.l0 {
		padding-left: 3px;
	}

	.node.l1 {
		padding-left: 8px;
		background: linear-gradient(#ccc, #ccc) 4px 0 / 1px 100% no-repeat;
	}

	.node.l2 {
		padding-left: 21px;
		background:
			linear-gradient(#aaa, #aaa) 14px 50% / 6px 0.500px no-repeat,
			linear-gradient(#ddd, #ddd) 9px 0 / 0.500px 100% no-repeat;
	}

	.node.sel span {
		background: #e2e2e2;
	}

	.node.cur span {
		font-weight: bold;
	}

	.exp {
		width: 4px;
		height: 4px;
		border: 0.500px solid #aaa;
		background: linear-gradient(#777, #777) 50% 50% / 3px 0.700px no-repeat #f8f8f8;
		margin-right: 3px;
		flex: none;
	}

	.rooticon {
		width: 5px;
		height: 5px;
		background: #888;
		border: 0.500px solid #666;
		margin-right: 5px;
		flex: none;
	}

	.bscroll {
		width: 6px;
		flex: none;
		display: flex;
		flex-direction: column;
		align-items: center;
		justify-content: space-between;
		background: #f4f4f4;
		font-size: 4px;
	}

	.bthumb {
		width: 6px;
		height: 196px;
		background: #d8d8d8;
		margin: -4px 0 50px;
	}

	.bhscroll {
		height: 5px;
		background: #f0f0f0;
		display: flex;
		align-items: center;
		flex: none;
		padding: 0 8px 0 2px;
		font-size: 4px;
		justify-content: space-between;
	}

	.bhscroll i {
		width: 44px;
		height: 5px;
		background: #c8c8c8;
		margin: 0 auto 0 2px;
	}

	.status {
		height: 10px;
		display: flex;
		align-items: center;
		background: linear-gradient(#d0d0d0, #b4b4b4);
		padding-left: 2px;
		box-sizing: border-box;
	}

	.stext {
		width: 281px;
		flex: none;
		white-space: nowrap;
		color: #444;
	}

	.lock {
		width: 6px;
		height: 6px;
		margin-right: 3px;
		flex: none;
	}

	.scombo {
		height: 9px;
		line-height: 9px;
		background: #fff;
		display: flex;
		justify-content: space-between;
		padding: 0 1px;
		box-sizing: border-box;
		color: #888;
		flex: none;
	}

	.wa {
		width: 80px;
		justify-content: flex-end;
	}

	.wb {
		width: 60px;
	}

	.sicons {
		display: flex;
		gap: 2px;
		margin: 0 0 0 3px;
		width: 12px;
		flex: none;
	}

	.sicons.gap2 {
		margin: 0 0 0 8px;
		width: 13px;
		gap: 5px;
	}

	.bicons {
		display: flex;
		align-items: center;
		gap: 5px;
		margin-left: 84px;
		white-space: nowrap;
		color: #555;
	}

	.filter {
		font-size: 5px;
	}
</style>
